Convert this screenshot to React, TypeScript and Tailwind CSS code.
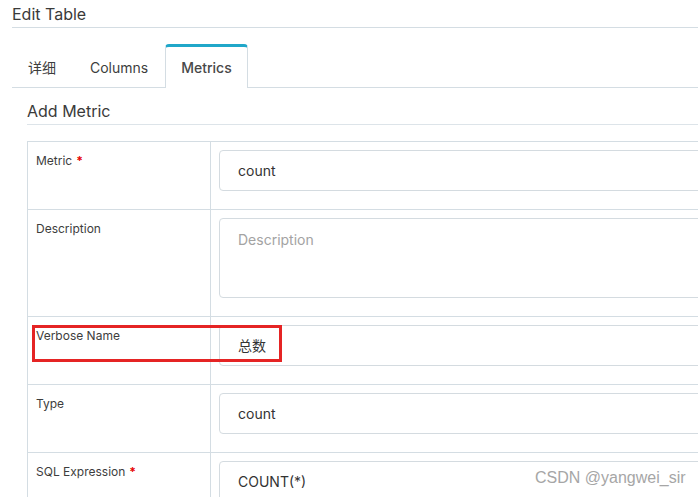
import React from "react";

type Row = {
	label: string;
	required?: boolean;
	value?: string;
	placeholder?: string;
	textarea?: boolean;
};

const rows: Row[] = [
	{ label: "Metric", required: true, value: "count" },
	{ label: "Description", placeholder: "Description", textarea: true },
	{ label: "Verbose Name", value: "总数" },
	{ label: "Type", value: "count" },
	{ label: "SQL Expression", required: true, value: "COUNT(*)" },
];

const tabs = ["详细", "Columns", "Metrics"];

const FieldRow = ({ label, required, value, placeholder, textarea }: Row) => {
	return (
		<div className="flex border-b border-[#d4dde3]">
			<div className="w-[183px] shrink-0 border-r border-[#d4dde3] pl-[8px] pt-[10px] text-[12px] leading-[18px] text-[#3d3d3d]">
				{label}
				{required && <span className="ml-[4px] text-[#e60000] font-bold">*</span>}
			</div>
			<div className="flex-1 pl-[8px] pt-[8px] pb-[18px]">
				<div
					className={`w-[600px] rounded-[4px] border border-[#d4dbe0] pl-[18px] text-[14px] ${
						textarea ? "h-[80px] pt-[10px] leading-[22px]" : "h-[41px] flex items-center"
					} ${value ? "text-[#333]" : "text-[#a3a3a3]"}`}
				>
					{value ?? placeholder}
				</div>
			</div>
		</div>
	);
};

export default function App() {
	return (
		<div
			className="relative w-[698px] h-[497px] overflow-hidden bg-white"
			style={{ fontFamily: "Inter, 'Noto Sans CJK SC', sans-serif" }}
		>
			<div className="ml-[12px] h-[28px] border-b border-[#d4dde3] pt-[2px] text-[16px] leading-[24px] text-[#3a3a3a]">
				Edit Table
			</div>

			<div className="ml-[12px] flex h-[60px] items-end border-b border-[#d4dde3] pl-[1px]">
				{tabs.map((t, i) => {
					const active = t === "Metrics";
					return (
						<div
							key={t}
							className={`-mb-px flex h-[44px] items-center px-[15px] text-[14px] ${
								i === 0 ? "mr-[4px]" : "mr-[2px]"
							} ${
								active
									? "rounded-t-[4px] border-x border-t-[3px] border-x-[#d4dde3] border-t-[#20a7c9] bg-white font-medium text-[#484848]"
									: "pt-[3px] text-[#3d3d3d]"
							}`}
						>
							{t}
						</div>
					);
				})}
			</div>

			<div className="ml-[27px]">
				<div className="h-[37px] border-b border-[#dde4e9] pt-[11px] text-[16px] leading-[24px] text-[#3a3a3a]">
					Add Metric
				</div>
				<div className="mt-[16px] border-l border-t border-[#d4dde3]">
					{rows.map((r) => (
						<FieldRow key={r.label} {...r} />
					))}
				</div>
			</div>

			<div className="absolute left-[32px] top-[325px] h-[37px] w-[250px] border-[3px] border-[#e52424]" />

			<div
				className="absolute left-[535px] top-[468px] text-[16px] leading-[20px] text-[#a6a6a6]"
				style={{ fontFamily: "'Liberation Sans', Arial, sans-serif" }}
			>
				CSDN @yangwei_sir
			</div>
		</div>
	);
}
